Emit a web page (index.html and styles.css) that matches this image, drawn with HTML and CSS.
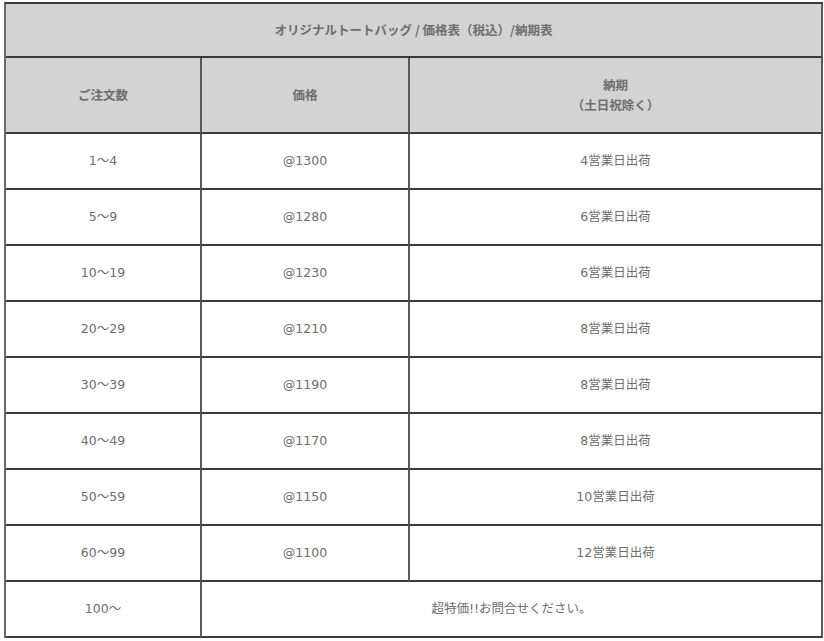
FILE: index.html
```html
<!DOCTYPE html>
<html lang="ja">
<head>
<meta charset="utf-8">
<title>価格表</title>
<link rel="stylesheet" href="styles.css">
</head>
<body>
<table class="price-table">
  <colgroup>
    <col class="c1">
    <col class="c2">
    <col class="c3">
  </colgroup>
  <thead>
    <tr class="title-row"><th colspan="3">オリジナルトートバッグ / 価格表（税込）/納期表</th></tr>
    <tr class="head-row">
      <th>ご注文数</th>
      <th>価格</th>
      <th>納期<br>（土日祝除く）</th>
    </tr>
  </thead>
  <tbody>
    <tr><td>1～4</td><td>@1300</td><td>4営業日出荷</td></tr>
    <tr><td>5～9</td><td>@1280</td><td>6営業日出荷</td></tr>
    <tr><td>10～19</td><td>@1230</td><td>6営業日出荷</td></tr>
    <tr><td>20～29</td><td>@1210</td><td>8営業日出荷</td></tr>
    <tr><td>30～39</td><td>@1190</td><td>8営業日出荷</td></tr>
    <tr><td>40～49</td><td>@1170</td><td>8営業日出荷</td></tr>
    <tr><td>50～59</td><td>@1150</td><td>10営業日出荷</td></tr>
    <tr><td>60～99</td><td>@1100</td><td>12営業日出荷</td></tr>
    <tr><td>100～</td><td colspan="2">超特価!!お問合せください。</td></tr>
  </tbody>
</table>
</body>
</html>
```
FILE: styles.css
```css
html, body {
  margin: 0;
  padding: 0;
  background: #ffffff;
}
body {
  padding: 2px 0 0 4px;
  font-family: "DejaVu Sans", "Noto Sans CJK JP", sans-serif;
  font-size: 12.5px;
  color: #6e6e6e;
}
.price-table {
  width: 819px;
  table-layout: fixed;
  border-collapse: separate;
  border-spacing: 0;
  border-top: 2px solid #3a3a3a;
  border-left: 2px solid #6a6a6a;
}
.c1 { width: 196px; }
.c2 { width: 208px; }
.c3 { width: 413px; }
.price-table th,
.price-table td {
  box-sizing: border-box;
  padding: 0;
  text-align: center;
  vertical-align: middle;
  border-right: 2px solid #5a5a5a;
  border-bottom: 2px solid #3a3a3a;
  line-height: 20px;
}
.price-table th {
  background: #d3d3d3;
  font-family: "Noto Sans CJK JP", sans-serif;
  font-weight: 700;
  color: #6e6e6e;
}
.title-row th { height: 54px; }
.head-row th { height: 76px; }
.price-table td { height: 56px; }
```
